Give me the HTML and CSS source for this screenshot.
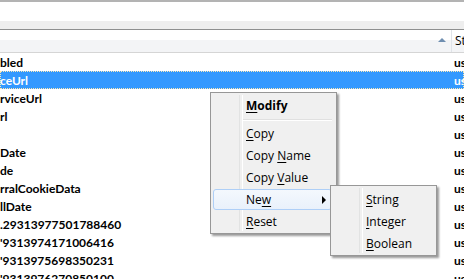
FILE: index.html
```html
<!DOCTYPE html>
<html lang="en">
<head>
	<meta charset="UTF-8">
	<title>Settings</title>
	<link rel="stylesheet" href="styles.css">
</head>
<body>
	<div class="topbar">
		<div class="topbar_field"></div>
		<div class="topbar_band"></div>
	</div>

	<div class="listview">
		<div class="lv_head">
			<div class="lv_col lv_col_name"><span class="sort_arrow"></span></div>
			<div class="lv_col lv_col_value">Status</div>
		</div>
		<ul class="lv_rows">
			<li><span class="name">bled</span><span class="val">user</span></li>
			<li class="cur"><span class="name">ceUrl</span><span class="val">user</span></li>
			<li><span class="name">rviceUrl</span><span class="val">user</span></li>
			<li><span class="name">rl</span><span class="val">user</span></li>
			<li><span class="name"></span><span class="val">user</span></li>
			<li><span class="name">Date</span><span class="val">user</span></li>
			<li><span class="name">de</span><span class="val">user</span></li>
			<li><span class="name">rralCookieData</span><span class="val">user</span></li>
			<li><span class="name">llDate</span><span class="val">user</span></li>
			<li><span class="name">.29313977501788460</span><span class="val">user</span></li>
			<li><span class="name">'9313974171006416</span><span class="val">user</span></li>
			<li><span class="name">'9313975698350231</span><span class="val">user</span></li>
			<li><span class="name">'9313976270850100</span><span class="val">user</span></li>
		</ul>
	</div>

	<!-- context menu -->
	<div class="menu menu_main">
		<div class="menu_item menu_default"><u>M</u>odify</div>
		<div class="menu_sep"></div>
		<div class="menu_item"><u>C</u>opy</div>
		<div class="menu_item">Copy <u>N</u>ame</div>
		<div class="menu_item">Copy <u>V</u>alue</div>
		<div class="menu_item menu_hover">Ne<u>w</u><b class="menu_arrow"></b></div>
		<div class="menu_item"><u>R</u>eset</div>
	</div>

	<div class="menu menu_sub">
		<div class="menu_item"><u>S</u>tring</div>
		<div class="menu_item"><u>I</u>nteger</div>
		<div class="menu_item"><u>B</u>oolean</div>
	</div>
</body>
</html>
```

FILE: styles.css
```css
*{
	margin: 0;
	padding: 0;
	box-sizing: border-box;
}
body{
	width: 464px;
	height: 279px;
	overflow: hidden;
	background: #fff;
	font-family: "Open Sans", "Liberation Sans", sans-serif;
	font-size: 12px;
	color: #000;
	position: relative;
}
.topbar{
	height: 30px;
	border-top: 2px solid #b3b3b3;
	border-bottom: 1px solid #8e8f8f;
}
.topbar_field{
	height: 19px;
	background: #fff;
}
.topbar_band{
	height: 8px;
	background: #eeeeee;
}
.lv_head{
	display: flex;
	height: 23px;
	background: linear-gradient(#fff 0, #fff 10px, #f3f4f6 10px, #f3f4f6 100%);
	border-bottom: 1px solid #d5d5d5;
	color: #1e395b;
}
.lv_col{
	display: flex;
	align-items: center;
	line-height: 22px;
}
.lv_col_name{
	width: 452px;
	justify-content: flex-end;
	padding-right: 5px;
	border-right: 1px solid #dfe3e8;
}
.lv_col_value{
	flex: 1;
	padding-left: 3px;
	white-space: nowrap;
	overflow: hidden;
	color: #000;
}
.sort_arrow{
	width: 0;
	height: 0;
	border-left: 4px solid transparent;
	border-right: 4px solid transparent;
	border-bottom: 4px solid #6f8eb0;
	margin-top: -2px;
}
.lv_rows{
	list-style: none;
	font-family: Lato, "Open Sans", sans-serif;
}
.lv_rows li{
	display: flex;
	height: 18px;
	line-height: 19px;
	font-weight: 700;
	white-space: nowrap;
}
.lv_rows li.cur{
	background: #3399ff;
	color: #fff;
	outline: 1px dotted #fbe9b4;
	outline-offset: -1px;
}
.lv_rows .name{
	width: 454px;
	overflow: hidden;
}
.lv_rows .val{
	flex: 1;
	overflow: hidden;
}
.menu{
	position: absolute;
	background: #f0f0f0;
	border: 1px solid #979797;
	box-shadow: 2px 2px 2px rgba(0, 0, 0, 0.4);
	font-size: 12px;
	color: #000;
}
.menu::before{
	content: "";
	position: absolute;
	top: 2px;
	bottom: 2px;
	left: 28px;
	width: 2px;
	border-left: 1px solid #e2e3e3;
	border-right: 1px solid #fff;
}
.menu_main{
	left: 210px;
	top: 92px;
	width: 127px;
	padding: 2px 4px 0 2px;
}
.menu_sub{
	left: 330px;
	top: 185px;
	width: 107px;
	padding: 3px 4px 0 2px;
	z-index: 2;
}
.menu_item{
	position: relative;
	height: 22px;
	line-height: 22px;
	padding-left: 33px;
	white-space: nowrap;
}
.menu_item u{
	text-decoration: underline;
	text-underline-offset: 2px;
}
.menu_default{
	font-weight: 700;
}
.menu_sep{
	height: 6px;
	margin-left: 30px;
	padding-top: 2px;
}
.menu_sep::after{
	content: "";
	display: block;
	border-top: 1px solid #e0e0e0;
	border-bottom: 1px solid #fff;
}
.menu_hover{
	background: linear-gradient(#f4f8fd, #e9f1fb);
	border: 1px solid #aecff7;
	border-radius: 3px;
	height: 21px;
	margin-bottom: 1px;
	padding-left: 32px;
	line-height: 20px;
}
.menu_arrow{
	position: absolute;
	right: 5px;
	top: 6px;
	width: 0;
	height: 0;
	border-top: 4px solid transparent;
	border-bottom: 4px solid transparent;
	border-left: 4px solid #000;
}
```
